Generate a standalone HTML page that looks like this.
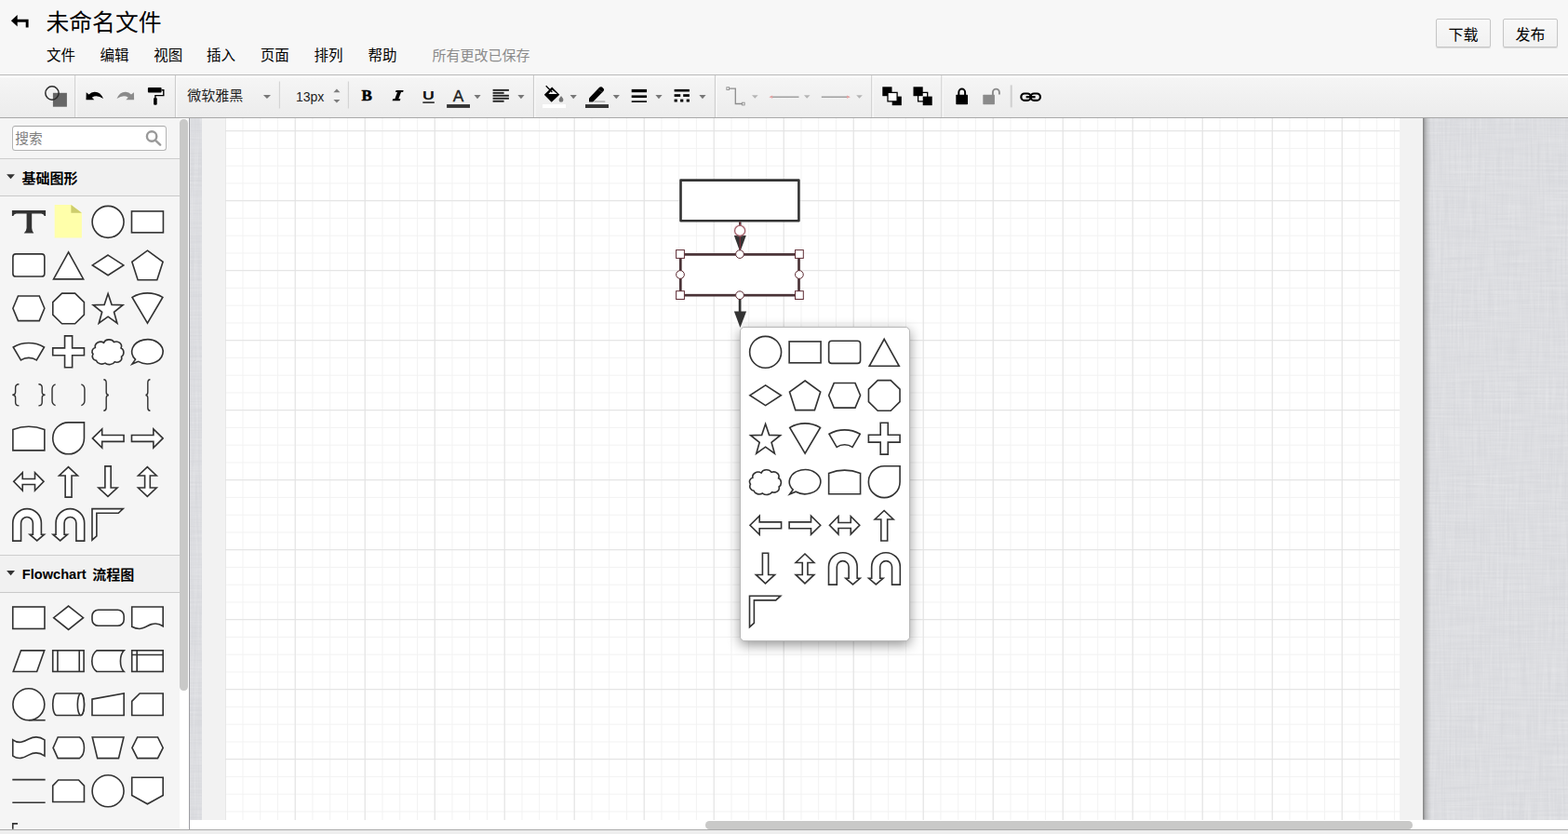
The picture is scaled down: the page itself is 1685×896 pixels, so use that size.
<!DOCTYPE html>
<html><head><meta charset="utf-8"><title>ProcessOn</title><style>
html,body{margin:0;padding:0;background:#fff;}
body{width:1685px;height:896px;overflow:hidden;position:relative;font-family:"Liberation Sans",sans-serif;}
.a{position:absolute;}
#hdr{left:0;top:0;width:1685px;height:80px;background:#f7f7f7;}
#tb{left:0;top:80px;width:1685px;height:46px;background:linear-gradient(#fbfbfb 0px,#fbfbfb 2px,#f5f5f5 3px,#ececec 45px);border-top:1px solid #bababa;border-bottom:1px solid #a8a8a8;box-sizing:content-box;height:45px;}
#side{left:0;top:127px;width:192.5px;height:764px;background:#f5f5f5;}
.sh{left:0;width:192.5px;background:#f1f1f1;border-top:1px solid #cdcdcd;border-bottom:1px solid #c9c9c9;}
#strack{left:192.5px;top:127px;width:10.6px;height:764px;background:#fff;}
#sthumb{left:193.4px;top:128.4px;width:8.4px;height:613.6px;background:#c9c9c8;border-radius:4.2px;}
#sep{left:203.1px;top:127px;width:1px;height:769px;background:#9d9da2;}
#cv{left:204px;top:127px;width:1481px;height:753.6px;background:#d8d9dd;overflow:hidden;}
#page{left:13px;top:-40px;width:1312.5px;height:900px;background:#f2f2f2;}
#grid{left:25.3px;top:0;width:1262px;height:900px;background-color:#fff;
 background-image:
  linear-gradient(90deg,#e2e2e2 0,#e2e2e2 1.25px,transparent 1.25px),
  linear-gradient(#e2e2e2 0,#e2e2e2 1.25px,transparent 1.25px),
  linear-gradient(90deg,#f2f2f2 0,#f2f2f2 1.25px,transparent 1.25px),
  linear-gradient(#f2f2f2 0,#f2f2f2 1.25px,transparent 1.25px);
 background-size:75px 75px,75px 75px,18.75px 18.75px,18.75px 18.75px;
 background-position:-0.3px 53.2px,-0.3px 53.2px,-0.3px 53.2px,-0.3px 53.2px;}
#rshadow{left:1325px;top:0;width:9px;height:760px;background:linear-gradient(90deg,rgba(90,90,90,.75),rgba(120,120,120,.35) 35%,rgba(160,160,160,0) 100%);}
#hbar{left:204px;top:880.6px;width:1481px;height:10.6px;background:#fff;}
#hthumb{left:758px;top:882.2px;width:1519.8px;height:8.6px;background:#c9c9c8;border-radius:4.3px;width:759.8px;}
#foot{left:0;top:891px;width:1685px;height:4px;background:#eee;border-top:1px solid #aaa;}
.btn{top:20.2px;width:57px;height:29.2px;border:1px solid #c6c6c6;border-radius:2px;background:linear-gradient(#f8f8f8,#f1f1f1);box-shadow:0 1px 1px rgba(0,0,0,.12);}
#search{left:13.4px;top:135.2px;width:163.3px;height:24.8px;border:1px solid #b4b4b4;border-top-color:#a8a8a8;border-radius:3.5px;background:#fff;}
#pop{left:794.9px;top:351.2px;width:181.4px;height:336px;background:#fff;border:1px solid #b8b8b8;border-radius:5px;box-shadow:0 4px 13px rgba(0,0,0,.42);}
svg{position:absolute;left:0;top:0;}
</style></head>
<body>
<div class="a" id="hdr"></div>
<div class="a" id="tb"></div>
<div class="a" id="side"></div>
<div class="a sh" style="top:169.9px;height:38.8px"></div>
<div class="a sh" style="top:595.9px;height:38.8px"></div>
<div class="a" id="strack"></div><div class="a" id="sthumb"></div>
<div class="a" id="cv"><div class="a" id="page"><div class="a" id="grid"></div></div></div>
<div class="a" id="sep"></div>
<div class="a" id="hbar"></div><div class="a" id="hthumb"></div>
<div class="a" id="foot"></div>
<div class="a btn" style="left:1543.4px"></div><div class="a btn" style="left:1615.2px"></div>
<div class="a" id="search"></div>
<div class="a" id="pop"></div>
<svg width="1685" height="896" viewBox="0 0 1685 896">
<defs><filter id="fab" x="0" y="0" width="100%" height="100%" color-interpolation-filters="sRGB">
<feTurbulence type="fractalNoise" baseFrequency="0.02 0.45" numOctaves="2" seed="3" result="h"/>
<feTurbulence type="fractalNoise" baseFrequency="0.45 0.02" numOctaves="2" seed="11" result="v"/>
<feComposite in="h" in2="v" operator="arithmetic" k1="0" k2=".5" k3=".5" k4="0" result="m"/>
<feColorMatrix in="m" type="matrix" values="0 0 0 0 1  0 0 0 0 1  0 0 0 0 1  .42 .42 0 0 -0.31"/>
</filter></defs>
<linearGradient id="rsh" x1="0" x2="1" y1="0" y2="0"><stop offset="0" stop-color="#5a5a5a" stop-opacity=".78"/><stop offset=".3" stop-color="#777" stop-opacity=".4"/><stop offset="1" stop-color="#999" stop-opacity="0"/></linearGradient>
<rect x="1529.4" y="127" width="155.6" height="753.6" filter="url(#fab)"/>
<rect x="1529" y="127" width="9" height="753.6" fill="url(#rsh)"/>
<rect x="204" y="127" width="13" height="753.6" filter="url(#fab)"/>
<g id="canvasshapes">
<rect x="731.5" y="193.6" width="126.9" height="43.7" fill="#fff" stroke="#333" stroke-width="2.6" stroke-linejoin="round"/>
<!-- connector 1 -->
<line x1="795.3" y1="238.5" x2="795.3" y2="256" stroke="#333" stroke-width="2.5"/>
<path d="M788.9,253.1 L801.8,253.1 L795.3,270.6 Z" fill="#333"/>
<line x1="795.3" y1="238.6" x2="795.3" y2="270" stroke="#7b2f3b" stroke-width="1.3"/>
<circle cx="795.1" cy="247.9" r="5.5" fill="#fff" stroke="#a35f69" stroke-width="1.3"/>
<circle cx="795.1" cy="247.9" r="6.6" fill="none" stroke="#c08a92" stroke-opacity=".22" stroke-width="1.2"/>
<!-- rect 2 (selected) -->
<rect x="731.3" y="273.4" width="127.2" height="43.8" fill="#fff" stroke="#4a3337" stroke-width="2.7"/>
<!-- connector 2 -->
<line x1="795.1" y1="318" x2="795.1" y2="337" stroke="#333" stroke-width="2.7"/>
<path d="M788.9,334.6 L802.1,334.6 L795.4,352 Z" fill="#333"/>
<!-- handles -->
<g fill="#fff" stroke="#5e2b33" stroke-width="1">
<rect x="726.6" y="268.6" width="8.8" height="8.8"/>
<rect x="854.5" y="268.6" width="8.8" height="8.8"/>
<rect x="726.6" y="312.7" width="8.8" height="8.8"/>
<rect x="854.5" y="312.7" width="8.8" height="8.8"/>
<circle cx="795" cy="273.1" r="4.35"/>
<circle cx="795" cy="317.2" r="4.35"/>
<circle cx="731" cy="295" r="4.35"/>
<circle cx="858.9" cy="295" r="4.35"/>
</g>
</g>
<g font-family="'Liberation Sans','Noto Sans CJK SC',sans-serif">
<text x="49.5" y="33" font-size="24.8" fill="#000">未命名文件</text>
<g font-size="15.5" fill="#000">
<text x="50" y="65">文件</text>
<text x="107.6" y="65">编辑</text>
<text x="165.2" y="65">视图</text>
<text x="222" y="65">插入</text>
<text x="279.8" y="65">页面</text>
<text x="337.4" y="65">排列</text>
<text x="395.4" y="65">帮助</text>
</g>
<text x="464.5" y="65.2" font-size="15" fill="#8a8a8a">所有更改已保存</text>
<text x="201.3" y="108.2" font-size="15" fill="#222">微软雅黑</text>
<text x="318" y="108.8" font-size="14" fill="#222">13px</text>
<text x="1556.5" y="42.8" font-size="16" fill="#000">下载</text>
<text x="1628.5" y="42.8" font-size="16" fill="#000">发布</text>
<text x="16.3" y="154" font-size="14.7" fill="#808080">搜索</text>
<text x="23.5" y="196.5" font-size="15" font-weight="bold" fill="#000">基础图形</text>
<text x="23.8" y="621.8" font-size="14.6" font-weight="bold" fill="#000">Flowchart</text>
<text x="99.2" y="622.8" font-size="15" font-weight="bold" fill="#000">流程图</text>
</g>
<rect x="80.2" y="81" width="1.2" height="45" fill="#cdcdcd"/>
<rect x="81.39999999999999" y="81" width="1.2" height="45" fill="#fafafa"/>
<rect x="187.9" y="81" width="1.2" height="45" fill="#cdcdcd"/>
<rect x="189.1" y="81" width="1.2" height="45" fill="#fafafa"/>
<rect x="572.9" y="81" width="1.2" height="45" fill="#cdcdcd"/>
<rect x="574.1" y="81" width="1.2" height="45" fill="#fafafa"/>
<rect x="767.9" y="81" width="1.2" height="45" fill="#cdcdcd"/>
<rect x="769.1" y="81" width="1.2" height="45" fill="#fafafa"/>
<rect x="936.1999999999999" y="81" width="1.2" height="45" fill="#cdcdcd"/>
<rect x="937.4" y="81" width="1.2" height="45" fill="#fafafa"/>
<rect x="1011.3" y="81" width="1.2" height="45" fill="#cdcdcd"/>
<rect x="1012.5" y="81" width="1.2" height="45" fill="#fafafa"/>
<rect x="299.79999999999995" y="87.5" width="1.2" height="29" fill="#d4d4d4"/>
<rect x="373.79999999999995" y="87.5" width="1.2" height="29" fill="#d4d4d4"/>
<rect x="1085.7" y="91.4" width="2" height="24" fill="#cfcfcf"/>
<rect x="56.9" y="99.8" width="15" height="14.9" fill="#666"/>
<circle cx="55.95" cy="100" r="7.15" fill="none" stroke="#2b2b2b" stroke-width="1.5"/>
<path transform="translate(92.4,98.7)" d="M0.3,0.6 L0.1,8.6 L8.9,8.6 L6.4,6.1 Q11.6,2.6 18.7,7.4 Q15.6,-0.2 9.2,0 Q5.6,0.2 3.2,2.9 Z" fill="#000"/>
<path transform="translate(144.2,98.7) scale(-1,1)" d="M0.3,0.6 L0.1,8.6 L8.9,8.6 L6.4,6.1 Q11.6,2.6 18.7,7.4 Q15.6,-0.2 9.2,0 Q5.6,0.2 3.2,2.9 Z" fill="#8a8a8a"/>
<rect x="158.9" y="93.9" width="14.7" height="5.6" rx="1" fill="#000"/>
<path d="M173.6,96.7 H175.8 V102.6 H166.9 V105.5" fill="none" stroke="#000" stroke-width="1.4"/>
<rect x="165.1" y="105" width="3.6" height="7.8" rx="1.2" fill="#000"/>
<path d="M282.90,101.90 H291.00 L286.95,106.10 Z" fill="#777"/>
<path d="M358.4,99.3 L361.9,95.6 L365.4,99.3 Z" fill="#7c7c7c"/>
<path d="M358.4,106.9 L361.9,110.5 L365.4,106.9 Z" fill="#7c7c7c"/>
<text x="388.6" y="108.25" font-family="'Liberation Serif',serif" font-weight="bold" font-size="17" fill="#000" stroke="#000" stroke-width=".5">B</text>
<path d="M425.6,97 H433.6 L433.1,99 H431 L428.3,106.3 H430.4 L429.8,108.3 H421.6 L422.2,106.3 H424.3 L427,99 H425 Z" fill="#000"/>
<text x="454.1" y="106.6" font-family="'Liberation Sans',sans-serif" font-weight="bold" font-size="13.5" textLength="12.8" lengthAdjust="spacingAndGlyphs" fill="#111">U</text>
<rect x="454.3" y="109.4" width="12.5" height="1.4" fill="#111"/>
<text x="492.55" y="109.4" text-anchor="middle" font-family="'Liberation Sans',sans-serif" font-size="17.3" fill="#222" stroke="#222" stroke-width=".35">A</text>
<rect x="480.1" y="112.1" width="24.9" height="3.8" fill="#333"/>
<path d="M509.45,102.00 H516.65 L513.05,106.20 Z" fill="#777"/>
<rect x="529.6" y="95.9" width="17.3" height="1.9" fill="#222"/>
<rect x="529.6" y="98.9" width="12" height="1.9" fill="#222"/>
<rect x="529.6" y="101.8" width="17.3" height="1.9" fill="#222"/>
<rect x="529.6" y="104.8" width="17.3" height="1.9" fill="#222"/>
<rect x="529.6" y="107.8" width="12" height="1.9" fill="#222"/>
<path d="M556.35,102.00 H563.55 L559.95,106.20 Z" fill="#777"/>
<path d="M593.2,93.4 L601.3,101.7 L592.7,109.8 L584.8,101.7 Z" fill="#000"/>
<path d="M593.2,96.6 L589.4,100.9 L598.9,100.9 Z" fill="#f2f2f2"/>
<path d="M586.7,92.2 L593.4,99" stroke="#000" stroke-width="1.3" fill="none"/>
<path d="M603,102.9 Q605.6,106 605.4,107.4 A2.4,2.4 0 0 1 600.6,107.4 Q600.5,106 603,102.9 Z" fill="#777"/>
<rect x="583" y="112.1" width="25" height="3.9" fill="#fff"/>
<path d="M612.60,102.00 H619.80 L616.20,106.20 Z" fill="#777"/>
<path d="M633,109.5 L633,105.6 L644.2,93.8 Q645.6,92.6 647,93.6 L648.6,95.2 Q649.6,96.5 648.6,97.7 L637.2,109.5 Z" fill="#000"/>
<path d="M642.9,96.3 L647.2,99.1" stroke="#555" stroke-width=".6" fill="none"/>
<rect x="638.3" y="108.6" width="12" height="0.9" fill="#888"/>
<rect x="629" y="112.1" width="25" height="3.9" fill="#333"/>
<path d="M658.70,102.00 H665.90 L662.30,106.20 Z" fill="#777"/>
<rect x="678.7" y="95.9" width="16.3" height="3.3" fill="#000"/>
<rect x="678.7" y="102.4" width="16.3" height="2.6" fill="#000"/>
<rect x="678.7" y="108.3" width="16.3" height="1.6" fill="#000"/>
<path d="M704.40,102.00 H711.60 L708.00,106.20 Z" fill="#777"/>
<rect x="724.6" y="95.9" width="16.3" height="2.6" fill="#000"/>
<rect x="724.6" y="101.2" width="6.6" height="2.7" fill="#000"/>
<rect x="734.2" y="101.2" width="6.7" height="2.7" fill="#000"/>
<rect x="724.6" y="106.6" width="3.2" height="2.9" fill="#000"/>
<rect x="731.1" y="106.6" width="3.2" height="2.9" fill="#000"/>
<rect x="737.7" y="106.6" width="3.2" height="2.9" fill="#000"/>
<path d="M751.35,102.00 H758.55 L754.95,106.20 Z" fill="#777"/>
<path d="M783.7,95.1 H790.3 V111.5 H797.4" fill="none" stroke="#8c8c8c" stroke-width="1.3"/>
<rect x="780.9" y="93.8" width="2.7" height="2.7" fill="#f2f2f2" stroke="#8c8c8c" stroke-width=".9"/>
<rect x="797.4" y="110.2" width="2.7" height="2.7" fill="#f2f2f2" stroke="#8c8c8c" stroke-width=".9"/>
<path d="M808.00,102.20 H814.60 L811.30,105.80 Z" fill="#b4b4b4"/>
<rect x="828" y="103.5" width="30.5" height="1.4" fill="#9a9a9a"/>
<path d="M826.3,104.2 L830.2,102.6 L830.2,105.8 Z" fill="#e6a3a3"/>
<path d="M863.90,102.20 H870.50 L867.20,105.80 Z" fill="#b4b4b4"/>
<rect x="882.8" y="103.5" width="29.5" height="1.4" fill="#9a9a9a"/>
<path d="M913.9,104.2 L910,102.6 L910,105.8 Z" fill="#e6a3a3"/>
<path d="M920.20,102.20 H926.80 L923.50,105.80 Z" fill="#b4b4b4"/>
<rect x="948.3" y="93.3" width="10.2" height="9.9" fill="#000"/>
<rect x="958.7" y="103.6" width="10.1" height="9.6" fill="#000"/>
<rect x="954" y="99.4" width="10.1" height="9.5" fill="#fff" stroke="#000" stroke-width="1.3"/>
<rect x="986.6" y="99.4" width="10.1" height="9.5" fill="#fff" stroke="#000" stroke-width="1.3"/>
<rect x="981.5" y="93.3" width="10.2" height="9.9" fill="#000"/>
<rect x="991.7" y="103.6" width="10" height="9.6" fill="#000"/>
<rect x="1027.3" y="101.8" width="12.7" height="10.4" rx=".6" fill="#000"/>
<path d="M1030.3,102 V99.2 A3.4,3.6 0 0 1 1037.1,99.2 V102" fill="none" stroke="#000" stroke-width="2"/>
<rect x="1056.3" y="101.8" width="12.6" height="10.4" rx=".6" fill="#8a8a8a"/>
<path d="M1066.9,102 V99.2 A3.5,3.6 0 0 1 1073.9,99.2 V101.6" fill="none" stroke="#8a8a8a" stroke-width="1.9"/>
<rect x="1097.3" y="100.5" width="10.4" height="7.3" rx="3.65" fill="none" stroke="#000" stroke-width="2.2"/>
<rect x="1107.5" y="100.5" width="10.4" height="7.3" rx="3.65" fill="none" stroke="#000" stroke-width="2.2"/>
<rect x="1102.6" y="103.1" width="10" height="2.2" fill="#000"/>
<path d="M11.9,22.2 L18.7,16 L18.7,20.7 L30.6,20.7 L30.6,29.6 L27.7,29.6 L27.7,23.7 L18.7,23.7 L18.7,28.4 Z" fill="#000"/>
<circle cx="163.1" cy="146.5" r="5.2" fill="none" stroke="#999" stroke-width="2.4"/>
<path d="M166.9,150.6 L172.2,155.6" stroke="#9a9a9a" stroke-width="2.4" stroke-linecap="round"/>
<path d="M7.1,187.2 H15.9 L11.5,192.3 Z" fill="#333"/>
<path d="M7.1,613.1 H16 L11.55,618.2 Z" fill="#333"/>
<path d="M12.9,225.9 H49.1 V232 H47.7 Q46.9,229.6 44.4,229.4 H34.2 V245 Q34.5,249 36.3,250.5 H25.7 Q28.2,249 28.6,245 V229.4 H17.6 Q15.1,229.6 14.3,232 H12.9 Z" fill="#333"/>
<path d="M58.7,220.1 H76.4 L87.9,228.8 V255.6 H58.7 Z" fill="#ffffaa"/>
<path d="M76.4,220.1 V228.8 H87.9 Z" fill="#cdcd6c"/>
<g transform="translate(0,212) scale(0.118694)" fill="#fff" stroke="#333" stroke-width="13.6" stroke-linejoin="miter">
<circle cx="978" cy="222" r="143"/>
<rect x="1192" y="126" width="286" height="193"/>
</g>
<g transform="translate(0,260) scale(0.118694)" fill="#fff" stroke="#333" stroke-width="13.6" stroke-linejoin="miter">
<rect x="117" y="108" width="286" height="204" rx="26"/>
<path d="M620,92 L755,336 L485,336 Z"/>
<path d="M978,118.5 L1119,210 L978,301.5 L837,210 Z"/>
<path d="M1335,77 L1475,179 L1422,343 L1248,343 L1195,179 Z"/>
</g>
<g transform="translate(0,306) scale(0.118694)" fill="#fff" stroke="#333" stroke-width="13.6" stroke-linejoin="miter">
<path d="M117,213 L164,101.5 L356,101.5 L403,213 L356,325.5 L164,325.5 Z"/>
<path d="M561,76.5 L679,76.5 L761.5,157 L761.5,271 L679,351.5 L561,351.5 L478.5,271 L478.5,157 Z"/>
<path d="M978.0,80.7 L1011.5,179.8 L1112.1,182.5 L1032.2,246.4 L1060.9,347.2 L978.0,287.6 L895.1,347.2 L923.8,246.4 L843.9,182.5 L944.5,179.8 Z"/>
<path d="M1335,347 L1197,113 A268,268 0 0 1 1473,113 Z"/>
</g>
<g transform="translate(0,353) scale(0.118694)" fill="#fff" stroke="#333" stroke-width="13.6" stroke-linejoin="miter">
<path d="M120,168 A284,284 0 0 1 400,168 L331,286 A126,126 0 0 0 189,286 Z"/>
<path d="M586,66 H654 V176 H762 V242 H654 V352 H586 V242 H478 V176 H586 Z"/>
<path d="M862,172 A50,44 0 0 1 940,128 A50,40 0 0 1 1032,122 A48,42 0 0 1 1096,176 A34,42 0 0 1 1100,254 A46,40 0 0 1 1038,302 A52,38 0 0 1 952,313 A52,42 0 0 1 872,290 A40,40 0 0 1 842,230 A36,36 0 0 1 862,172 Z"/>
<path d="M1226,279 A141,110 0 1 1 1252,298 L1196,321 Z"/>
</g>
<g transform="translate(0,446) scale(0.118694)" fill="#fff" stroke="#333" stroke-width="13.6" stroke-linejoin="miter">
<path d="M117,131 Q260,75 403,131 V319 H117 Z"/>
<path d="M620,66 H762 V209 A142,143 0 1 1 620,66 Z"/>
<path d="M838,210 L924,125 V181 H1121 V239 H924 V295 Z"/>
<path d="M1475,210 L1389,125 V181 H1192 V239 H1389 V295 Z"/>
</g>
<g transform="translate(0,493) scale(0.118694)" fill="#fff" stroke="#333" stroke-width="13.6" stroke-linejoin="miter">
<path d="M124,205 L204,124 V181 H316 V124 L396,205 L316,286 V232 H204 V286 Z"/>
<path d="M619,72 L703,152 H649 V346 H591 V152 H535 Z"/>
<path d="M977,340 L1062,261 H1004 V66 H951 V261 H892 Z"/>
<path d="M1334,72 L1417,152 H1359 V261 H1417 L1334,340 L1251,261 H1311 V152 H1251 Z"/>
</g>
<g transform="translate(0,540) scale(0.118694)" fill="#fff" stroke="#333" stroke-width="13.6" stroke-linejoin="miter">
<path d="M116,346 V185 A129,129 0 0 1 374,185 V288 H400 L335,344 L270,288 H298 V185 A54,54 0 0 0 190,185 V346 Z"/>
<path d="M 764,346 V 185 A 129,129 0 0 0 506,185 V 288 H 480 L 545,344 L 610,288 H 582 V 185 A 54,54 0 0 1 690,185 V 346 Z"/>
<path d="M834,56 H1114 L1072,95 H875 V302 L834,338 Z"/>
</g>
<g transform="translate(0,400) scale(0.118694)" fill="none" stroke="#333" stroke-width="11.968">
<path d="M172,108 Q140,108 140,140 V180 Q140,205 112,205 Q140,205 140,230 V272 Q140,302 172,302"/>
<path d="M 349,108 Q 381,108 381,140 V 180 Q 381,205 409,205 Q 381,205 381,230 V 272 Q 381,302 349,302"/>
<path d="M502,108 Q472,120 472,152 V258 Q472,290 502,300"/>
<path d="M 736,108 Q 766,120 766,152 V 258 Q 766,290 736,300"/>
<path d="M938,65 Q962,65 962,95 V180 Q962,206 985,206 Q962,206 962,232 V320 Q962,347 938,347"/>
<path d="M1360,65 Q1338,65 1338,95 V180 Q1338,206 1318,206 Q1338,206 1338,232 V320 Q1338,347 1360,347"/>
</g>
<g transform="translate(0,640) scale(0.118694)" fill="#fff" stroke="#333" stroke-width="13.6" stroke-linejoin="miter">
<rect x="116" y="101" width="288" height="198"/>
<path d="M620,93 L754,200 L620,307 L486,200 Z"/>
<rect x="834" y="128" width="288" height="144" rx="56"/>
<path d="M1194,101 H1476 V276 C1440,250 1405,248 1372,258 C1335,270 1300,298 1262,299 C1235,299 1215,292 1194,280 Z"/>
</g>
<g transform="translate(0,686) scale(0.118694)" fill="#fff" stroke="#333" stroke-width="13.6" stroke-linejoin="miter">
<path d="M190,108 H402 L334,299 H120 Z"/>
<rect x="478" y="108" width="281" height="191"/><path d="M522,108 V299 M718,108 V299"/>
<path d="M876,108 H1122 C1080,150 1080,257 1122,299 H876 C818,257 818,150 876,108 Z"/>
<rect x="1194" y="108" width="282" height="191"/><path d="M1240,108 V299 M1194,148 H1476"/>
</g>
<g transform="translate(0,733) scale(0.118694)" fill="#fff" stroke="#333" stroke-width="13.6" stroke-linejoin="miter">
<circle cx="260" cy="200" r="143"/><path d="M260,343 H410"/>
<path d="M512,101 H732 A30,99 0 0 1 732,299 H512 A34,99 0 0 1 512,101 Z"/><ellipse cx="732" cy="200" rx="30" ry="99"/>
<path d="M834,153 L1122,101 V299 H834 Z"/>
<path d="M1194,172 L1265,101 H1476 V299 H1194 Z"/>
</g>
<g transform="translate(0,780) scale(0.118694)" fill="#fff" stroke="#333" stroke-width="13.6" stroke-linejoin="miter">
<path d="M116,125 C170,165 215,142 260,118 C305,94 350,88 404,125 V270 C350,232 305,238 260,262 C215,287 170,308 116,270 Z"/>
<path d="M524,101 H720 C776,138 776,256 720,292 H524 L481,197 Z"/>
<path d="M836,101 H1120 L1074,292 H882 Z"/>
<path d="M1196,197 L1244,101 H1428 L1476,197 L1428,292 H1244 Z"/>
</g>
<g transform="translate(0,826) scale(0.118694)" fill="#fff" stroke="#333" stroke-width="13.6" stroke-linejoin="miter">
<path d="M112,98 H410 M112,305 H410"/>
<path d="M478,153 L528,101 H712 L762,153 V299 H478 Z"/>
<circle cx="978" cy="200" r="143"/>
<path d="M1194,78 H1476 V240 L1335,318 L1194,240 Z"/>
<path d="M116,546 V496 H160"/>
</g>
<g transform="translate(706.52,351.95) scale(0.118694)" fill="#fff" stroke="#333" stroke-width="13.6" stroke-linejoin="miter">
<circle cx="978" cy="222" r="143"/>
</g>
<g transform="translate(706.64,351.95) scale(0.118694)" fill="#fff" stroke="#333" stroke-width="13.6" stroke-linejoin="miter">
<rect x="1192" y="126" width="286" height="193"/>
</g>
<g transform="translate(876.74,353.37) scale(0.118694)" fill="#fff" stroke="#333" stroke-width="13.6" stroke-linejoin="miter">
<rect x="117" y="108" width="286" height="204" rx="26"/>
</g>
<g transform="translate(876.63,353.37) scale(0.118694)" fill="#fff" stroke="#333" stroke-width="13.6" stroke-linejoin="miter">
<path d="M620,92 L755,336 L485,336 Z"/>
</g>
<g transform="translate(706.52,399.87) scale(0.118694)" fill="#fff" stroke="#333" stroke-width="13.6" stroke-linejoin="miter">
<path d="M978,118.5 L1119,210 L978,301.5 L837,210 Z"/>
</g>
<g transform="translate(706.64,399.87) scale(0.118694)" fill="#fff" stroke="#333" stroke-width="13.6" stroke-linejoin="miter">
<path d="M1335,77 L1475,179 L1422,343 L1248,343 L1195,179 Z"/>
</g>
<g transform="translate(876.74,399.52) scale(0.118694)" fill="#fff" stroke="#333" stroke-width="13.6" stroke-linejoin="miter">
<path d="M117,213 L164,101.5 L356,101.5 L403,213 L356,325.5 L164,325.5 Z"/>
</g>
<g transform="translate(876.63,399.52) scale(0.118694)" fill="#fff" stroke="#333" stroke-width="13.6" stroke-linejoin="miter">
<path d="M561,76.5 L679,76.5 L761.5,157 L761.5,271 L679,351.5 L561,351.5 L478.5,271 L478.5,157 Z"/>
</g>
<g transform="translate(706.52,446.02) scale(0.118694)" fill="#fff" stroke="#333" stroke-width="13.6" stroke-linejoin="miter">
<path d="M978.0,80.7 L1011.5,179.8 L1112.1,182.5 L1032.2,246.4 L1060.9,347.2 L978.0,287.6 L895.1,347.2 L923.8,246.4 L843.9,182.5 L944.5,179.8 Z"/>
</g>
<g transform="translate(706.64,446.02) scale(0.118694)" fill="#fff" stroke="#333" stroke-width="13.6" stroke-linejoin="miter">
<path d="M1335,347 L1197,113 A268,268 0 0 1 1473,113 Z"/>
</g>
<g transform="translate(876.74,446.37) scale(0.118694)" fill="#fff" stroke="#333" stroke-width="13.6" stroke-linejoin="miter">
<path d="M120,168 A284,284 0 0 1 400,168 L331,286 A126,126 0 0 0 189,286 Z"/>
</g>
<g transform="translate(876.63,446.37) scale(0.118694)" fill="#fff" stroke="#333" stroke-width="13.6" stroke-linejoin="miter">
<path d="M586,66 H654 V176 H762 V242 H654 V352 H586 V242 H478 V176 H586 Z"/>
</g>
<g transform="translate(706.52,492.87) scale(0.118694)" fill="#fff" stroke="#333" stroke-width="13.6" stroke-linejoin="miter">
<path d="M862,172 A50,44 0 0 1 940,128 A50,40 0 0 1 1032,122 A48,42 0 0 1 1096,176 A34,42 0 0 1 1100,254 A46,40 0 0 1 1038,302 A52,38 0 0 1 952,313 A52,42 0 0 1 872,290 A40,40 0 0 1 842,230 A36,36 0 0 1 862,172 Z"/>
</g>
<g transform="translate(706.64,492.87) scale(0.118694)" fill="#fff" stroke="#333" stroke-width="13.6" stroke-linejoin="miter">
<path d="M1226,279 A141,110 0 1 1 1252,298 L1196,321 Z"/>
</g>
<g transform="translate(876.74,492.87) scale(0.118694)" fill="#fff" stroke="#333" stroke-width="13.6" stroke-linejoin="miter">
<path d="M117,131 Q260,75 403,131 V319 H117 Z"/>
</g>
<g transform="translate(876.63,492.87) scale(0.118694)" fill="#fff" stroke="#333" stroke-width="13.6" stroke-linejoin="miter">
<path d="M620,66 H762 V209 A142,143 0 1 1 620,66 Z"/>
</g>
<g transform="translate(706.52,539.37) scale(0.118694)" fill="#fff" stroke="#333" stroke-width="13.6" stroke-linejoin="miter">
<path d="M838,210 L924,125 V181 H1121 V239 H924 V295 Z"/>
</g>
<g transform="translate(706.64,539.37) scale(0.118694)" fill="#fff" stroke="#333" stroke-width="13.6" stroke-linejoin="miter">
<path d="M1475,210 L1389,125 V181 H1192 V239 H1389 V295 Z"/>
</g>
<g transform="translate(876.74,539.97) scale(0.118694)" fill="#fff" stroke="#333" stroke-width="13.6" stroke-linejoin="miter">
<path d="M124,205 L204,124 V181 H316 V124 L396,205 L316,286 V232 H204 V286 Z"/>
</g>
<g transform="translate(876.63,539.97) scale(0.118694)" fill="#fff" stroke="#333" stroke-width="13.6" stroke-linejoin="miter">
<path d="M619,72 L703,152 H649 V346 H591 V152 H535 Z"/>
</g>
<g transform="translate(706.52,586.47) scale(0.118694)" fill="#fff" stroke="#333" stroke-width="13.6" stroke-linejoin="miter">
<path d="M977,340 L1062,261 H1004 V66 H951 V261 H892 Z"/>
</g>
<g transform="translate(706.64,586.47) scale(0.118694)" fill="#fff" stroke="#333" stroke-width="13.6" stroke-linejoin="miter">
<path d="M1334,72 L1417,152 H1359 V261 H1417 L1334,340 L1251,261 H1311 V152 H1251 Z"/>
</g>
<g transform="translate(876.74,587.06) scale(0.118694)" fill="#fff" stroke="#333" stroke-width="13.6" stroke-linejoin="miter">
<path d="M116,346 V185 A129,129 0 0 1 374,185 V288 H400 L335,344 L270,288 H298 V185 A54,54 0 0 0 190,185 V346 Z"/>
</g>
<g transform="translate(876.63,587.06) scale(0.118694)" fill="#fff" stroke="#333" stroke-width="13.6" stroke-linejoin="miter">
<path d="M 764,346 V 185 A 129,129 0 0 0 506,185 V 288 H 480 L 545,344 L 610,288 H 582 V 185 A 54,54 0 0 1 690,185 V 346 Z"/>
</g>
<g transform="translate(706.52,633.56) scale(0.118694)" fill="#fff" stroke="#333" stroke-width="13.6" stroke-linejoin="miter">
<path d="M834,56 H1114 L1072,95 H875 V302 L834,338 Z"/>
</g>
</svg>
</body></html>
